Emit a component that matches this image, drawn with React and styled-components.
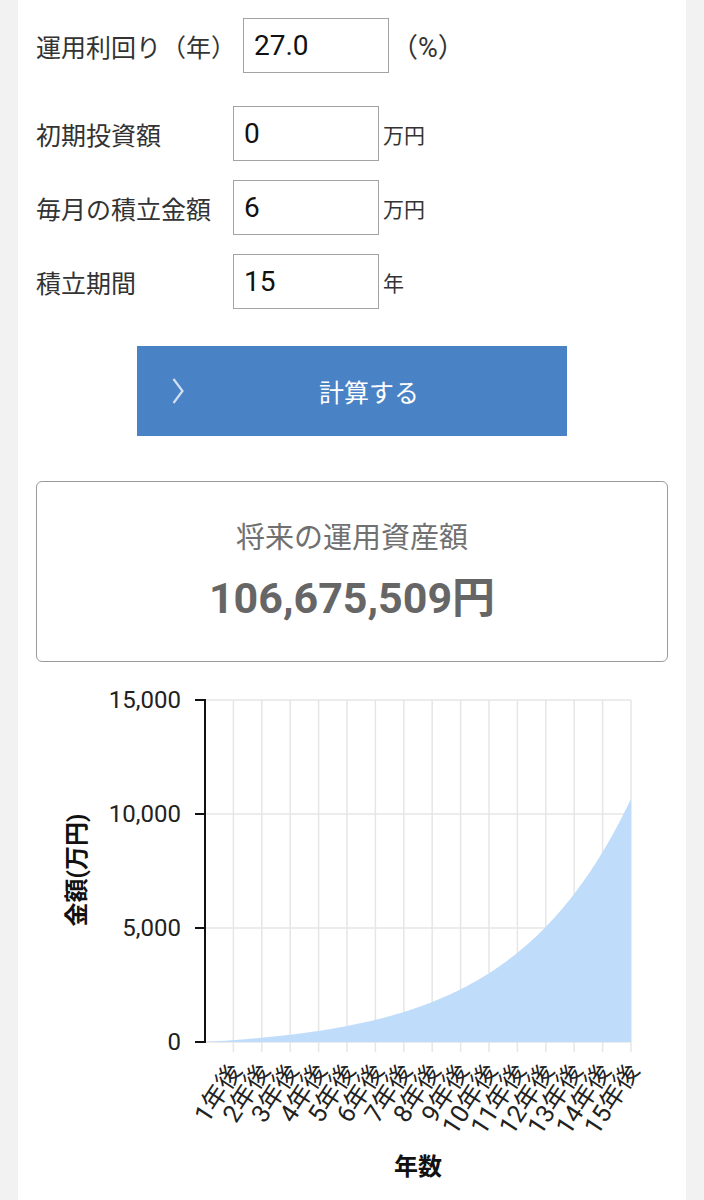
import styled, { createGlobalStyle } from 'styled-components';

const GlobalStyle = createGlobalStyle`
  body {
    margin: 0;
    background: #f2f2f2;
    font-family: Roboto, "Noto Sans CJK JP", sans-serif;
    color: #333;
  }
`;

const rate = 1.27 ** (1 / 12) - 1;
const monthly = Array.from({ length: 181 }, (_, m) => (
  m === 0 ? 0 : 6 * (((1 + rate) ** m - 1) / rate) * (1 + rate)
));

// chart geometry (svg coords)
const AX = 169;
const PW = 426;
const TOP = 20;
const BOTTOM = 362;
const MAX = 15000;
const px = m => AX + (m * PW) / 180;
const py = v => BOTTOM - (v * (BOTTOM - TOP)) / MAX;

const yTicks = [15000, 10000, 5000, 0];
const years = Array.from({ length: 15 }, (_, i) => i + 1);

function App() {
  const area = [
    `M${AX},${BOTTOM}`,
    ...monthly.map((v, m) => `L${px(m).toFixed(2)},${py(v).toFixed(2)}`),
    `L${px(180)},${BOTTOM}Z`,
  ].join(' ');

  return (
    <>
      <GlobalStyle />
      <Panel>
        <FirstRow>
          <WideLabel>運用利回り（年）</WideLabel>
          <Field defaultValue="27.0" />
          <Percent>（%）</Percent>
        </FirstRow>
        <Row $first>
          <Label>初期投資額</Label>
          <Field defaultValue="0" />
          <Unit>万円</Unit>
        </Row>
        <Row>
          <Label>毎月の積立金額</Label>
          <Field defaultValue="6" />
          <Unit>万円</Unit>
        </Row>
        <Row>
          <Label>積立期間</Label>
          <Field defaultValue="15" />
          <Unit>年</Unit>
        </Row>

        <CalcButton type="button">
          <svg width="12" height="26" viewBox="0 0 12 26">
            <polyline points="1.5,1 10.5,13 1.5,25" fill="none" stroke="rgba(255,255,255,0.75)" strokeWidth="2.2" />
          </svg>
          <ButtonText>計算する</ButtonText>
        </CalcButton>

        <ResultBox>
          <ResultTitle>将来の運用資産額</ResultTitle>
          <ResultAmount>106,675,509円</ResultAmount>
        </ResultBox>

        <Chart viewBox="0 0 632 520" width="632" height="520">
          {yTicks.slice(0, 3).map(v => (
            <line key={v} x1={AX} x2={AX + PW} y1={py(v)} y2={py(v)} stroke="#e6e6e6" strokeWidth="1.5" />
          ))}
          {years.map(y => (
            <line key={y} x1={px(y * 12)} x2={px(y * 12)} y1={TOP} y2={BOTTOM + 10} stroke="#e6e6e6" strokeWidth="1.5" />
          ))}
          <line x1={AX} x2={AX + PW} y1={BOTTOM} y2={BOTTOM} stroke="#e6e6e6" strokeWidth="1.5" />
          <path d={area} fill="#bfdcfb" />
          <line x1={AX} x2={AX} y1={TOP - 1} y2={BOTTOM + 1} stroke="#111" strokeWidth="2" />
          {yTicks.map(v => (
            <g key={v}>
              <line x1={AX - 10} x2={AX} y1={py(v)} y2={py(v)} stroke="#111" strokeWidth="2" />
              <text x={AX - 24} y={py(v)} textAnchor="end" dominantBaseline="central" fontSize="24" fill="#222">
                {v.toLocaleString('en-US')}
              </text>
            </g>
          ))}
          {years.map(y => {
            const x = px(y * 12) + 2;
            const ly = BOTTOM + 24;
            return (
              <text
                key={y}
                x={x}
                y={ly}
                textAnchor="end"
                dominantBaseline="central"
                fontSize="25"
                fill="#222"
                transform={`rotate(-57 ${x} ${ly})`}
              >
                {`${y}年後`}
              </text>
            );
          })}
          <text x="41" y="190" textAnchor="middle" dominantBaseline="central" fontSize="24" fontWeight="700" fill="#111" transform="rotate(-90 41 190)">
            金額(万円)
          </text>
          <text x="382" y="487" textAnchor="middle" dominantBaseline="central" fontSize="24" fontWeight="700" fill="#111">
            年数
          </text>
        </Chart>
      </Panel>
    </>
  );
}

const Panel = styled.main`
  margin: 0 18px;
  min-height: 1200px;
  background: #fff;
  padding: 18px 18px 0;
  box-sizing: border-box;
`;

const FirstRow = styled.div`
  display: flex;
  align-items: center;
`;

const Row = styled.div`
  display: flex;
  align-items: center;
  margin-top: ${p => (p.$first ? '33px' : '19px')};
`;

const WideLabel = styled.span`
  font-size: 25px;
  margin-right: 7px;
  white-space: nowrap;
`;

const Label = styled.span`
  width: 197px;
  flex: none;
  font-size: 25px;
  white-space: nowrap;
`;

const Field = styled.input`
  width: 146px;
  height: 55px;
  box-sizing: border-box;
  border: 1px solid #a3a3a3;
  border-radius: 0;
  padding: 0 0 0 10px;
  font-family: Roboto, "Noto Sans CJK JP", sans-serif;
  font-size: 28px;
  color: #111;
  background: #fff;
  outline: none;
`;

const Percent = styled.span`
  font-size: 27px;
  margin-left: 2px;
`;

const Unit = styled.span`
  font-size: 21px;
  margin-left: 4px;
`;

const CalcButton = styled.button`
  display: flex;
  align-items: center;
  width: 430px;
  height: 90px;
  margin: 37px auto 0;
  padding: 0 13px 0 35px;
  border: none;
  background: #4a83c5;
  color: #fff;
  cursor: pointer;
  font-family: inherit;
`;

const ButtonText = styled.span`
  flex: 1;
  text-align: center;
  font-size: 25px;
`;

const ResultBox = styled.section`
  margin-top: 45px;
  height: 181px;
  box-sizing: border-box;
  border: 1px solid #9a9a9a;
  border-radius: 6px;
  display: flex;
  flex-direction: column;
  align-items: center;
  padding-top: 36px;
`;

const ResultTitle = styled.div`
  font-size: 29px;
  color: #707070;
  line-height: 40px;
`;

const ResultAmount = styled.div`
  margin-top: 14px;
  font-size: 43px;
  font-weight: 700;
  color: #666;
  line-height: 52px;
`;

const Chart = styled.svg`
  display: block;
  margin-top: 18px;
  font-family: Roboto, "Noto Sans CJK JP", sans-serif;
`;

export default App;
